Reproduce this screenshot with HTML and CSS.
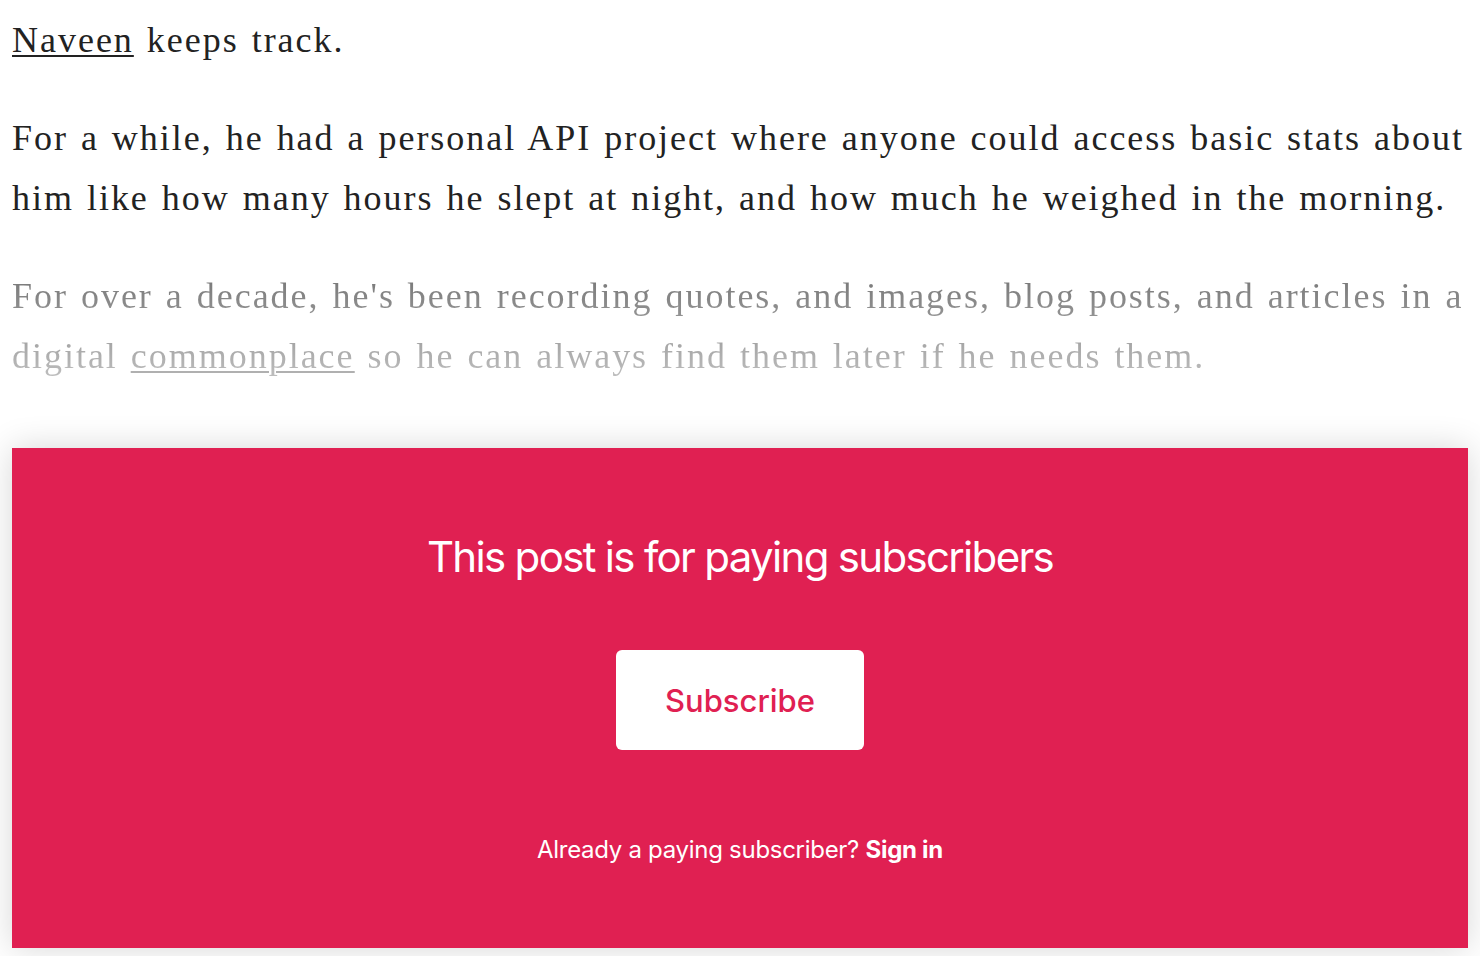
FILE: index.html
```html
<!DOCTYPE html>
<html lang="en">
  <head>
    <meta charset="UTF-8" />
    <meta name="viewport" content="width=device-width, initial-scale=1.0" />
    <title>Naveen keeps track</title>
    <link rel="stylesheet" href="styles.css">
  </head>
  <body>
    <main class="post">
      <div class="post-body">
        <p><a href="#">Naveen</a> keeps track.</p>
        <p>For a while, he had a personal API project where anyone could access basic stats about him like how many hours he slept at night, and how much he weighed in the morning.</p>
        <p class="fade">For over a decade, he's been recording quotes, and images, blog posts, and articles in a digital <a href="#">commonplace</a> so he can always find them later if he needs them.</p>
      </div>

      <!-- Paywall -->
      <section class="paywall">
        <h2>This post is for paying subscribers</h2>
        <a class="subscribe-btn" href="#">Subscribe</a>
        <p class="sign-in">Already a paying subscriber? <a href="#">Sign in</a></p>
      </section>
    </main>
  </body>
</html>
```

FILE: styles.css
```css
body {
  margin: 0;
  padding: 0;
  background-color: #fff;
  color: #222;
}

.post {
  padding: 10px 12px 8px;
}

.post-body {
  font-family: "Liberation Serif", "Times New Roman", serif;
  font-size: 36px;
  line-height: 60px;
  letter-spacing: 0.055em;
  word-spacing: 2px;
}

.post-body p {
  margin: 0 0 38px;
}

.post-body a {
  color: inherit;
  text-decoration: underline;
  text-decoration-thickness: 2px;
  text-underline-offset: 3px;
}

/* last paragraph fades out into the paywall */
.post-body p.fade {
  margin-bottom: 62px;
  background: linear-gradient(#707070, #c4c4c4);
  -webkit-background-clip: text;
  background-clip: text;
  -webkit-text-fill-color: transparent;
}

.post-body p.fade a {
  color: #b0b0b0;
  text-decoration-color: #b0b0b0;
}

.paywall {
  display: flex;
  flex-direction: column;
  align-items: center;
  height: 500px;
  box-sizing: border-box;
  padding-top: 84px;
  background-color: #e02052;
  color: #fff;
  font-family: "Inter", "Liberation Sans", sans-serif;
  box-shadow: 0 0 32px rgba(0, 0, 0, 0.16);
}

.paywall h2 {
  margin: 0;
  font-size: 42px;
  font-weight: 400;
  line-height: 50px;
  letter-spacing: -0.04em;
}

.subscribe-btn {
  display: flex;
  align-items: center;
  justify-content: center;
  width: 248px;
  height: 100px;
  margin-top: 68px;
  background-color: #fff;
  border-radius: 6px;
  color: #e02052;
  font-size: 31px;
  font-weight: 500;
  text-decoration: none;
}

.sign-in {
  margin: 85px 0 0;
  font-size: 24px;
  line-height: 29px;
  letter-spacing: -0.012em;
}

.sign-in a {
  color: #fff;
  font-weight: 700;
  text-decoration: none;
}
```
